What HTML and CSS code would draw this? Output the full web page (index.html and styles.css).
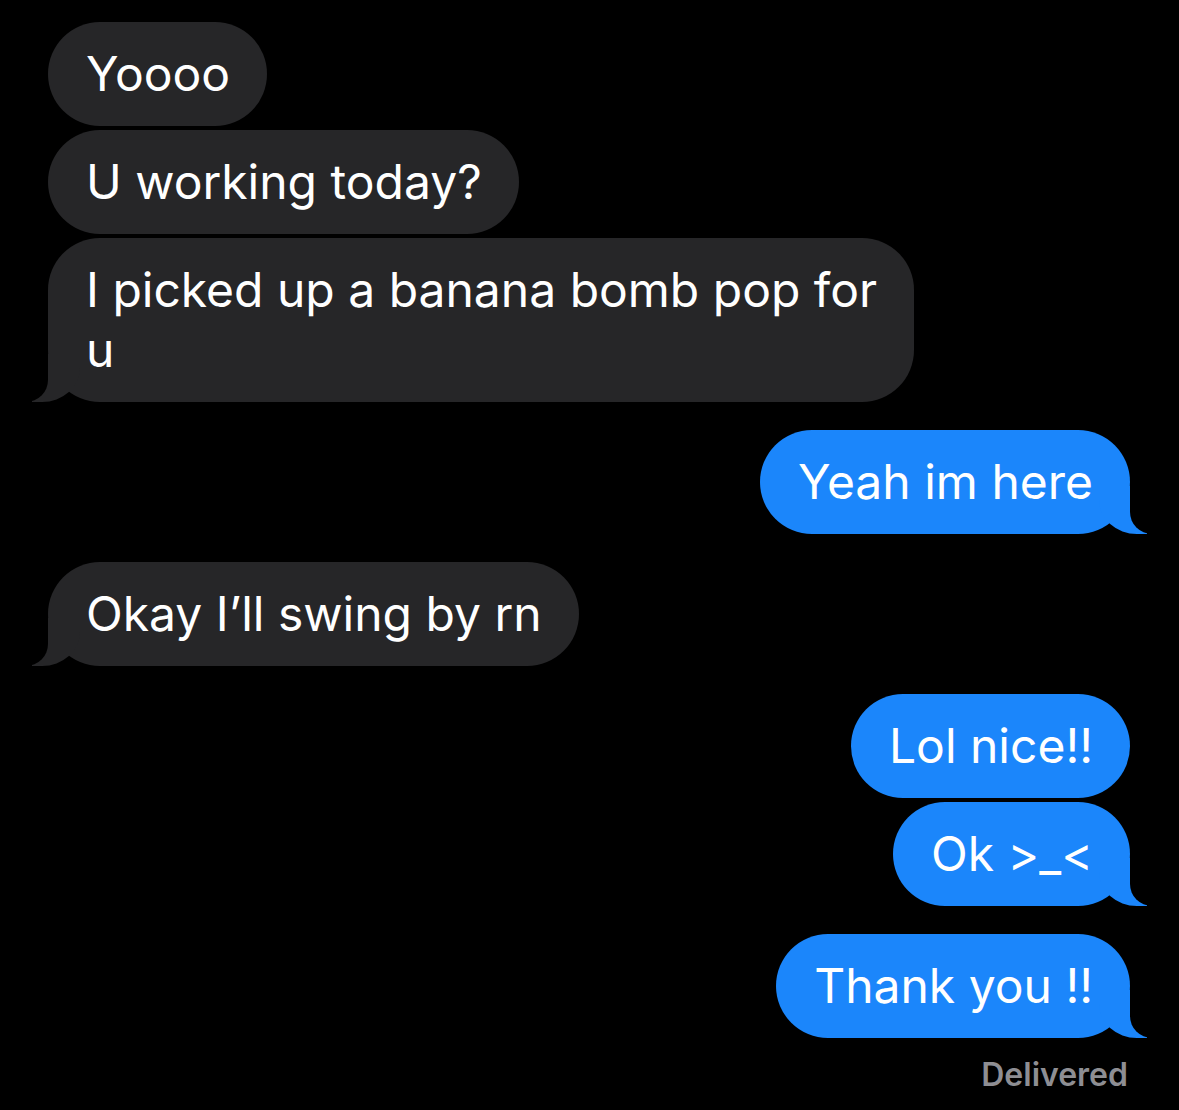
FILE: index.html
```html
<!DOCTYPE html>
<html lang="en">
<head>
  <meta charset="UTF-8" />
  <meta name="viewport" content="width=device-width, initial-scale=1.0"/>
  <title>Messages</title>
  <link rel="stylesheet" href="styles.css">
</head>
<body>
  <div class="thread">
    <!-- them -->
    <div class="group">
      <div class="bubble them">Yoooo</div>
      <div class="bubble them">U working today?</div>
      <div class="bubble them tail">I picked up a banana bomb pop for<br/>u</div>
    </div>

    <!-- me -->
    <div class="group">
      <div class="bubble me tail">Yeah im here</div>
    </div>

    <div class="group">
      <div class="bubble them tail">Okay I’ll swing by rn</div>
    </div>

    <div class="group">
      <div class="bubble me">Lol nice!!</div>
      <div class="bubble me tail">Ok &gt;_&lt;</div>
    </div>

    <div class="group">
      <div class="bubble me tail">Thank you !!</div>
      <div class="status">Delivered</div>
    </div>
  </div>
</body>
</html>
```

FILE: styles.css
```css
body {
  margin: 0;
  background: #000;
  font-family: Inter, "Liberation Sans", sans-serif;
  color: #fff;
  overflow: hidden;
}

/* 대화 영역 */
.thread {
  display: flex;
  flex-direction: column;
  gap: 28px;
  padding: 22px 49px 0 48px;
}
.group {
  display: flex;
  flex-direction: column;
  gap: 4px;
}

/* 말풍선 */
.bubble {
  position: relative;
  font-size: 48px;
  line-height: 60px;
  padding: 22px 37px 22px 38px;
  border-radius: 52px;
  max-width: 820px;
}
.them {
  align-self: flex-start;
  background: #262628;
}
.me {
  align-self: flex-end;
  background: #1b86fb;
}

/* 꼬리 */
.tail::before,
.tail::after {
  content: '';
  position: absolute;
  bottom: 0;
  height: 48px;
}
.them.tail::before {
  left: -16px;
  width: 48px;
  background: #262628;
  border-bottom-right-radius: 38px 34px;
}
.them.tail::after {
  left: -60px;
  width: 60px;
  background: #000;
  border-bottom-right-radius: 22px;
}
.me.tail::before {
  right: -17px;
  width: 48px;
  background: #1b86fb;
  border-bottom-left-radius: 38px 34px;
}
.me.tail::after {
  right: -60px;
  width: 60px;
  background: #000;
  border-bottom-left-radius: 22px;
}

/* 전송 상태 */
.status {
  align-self: flex-end;
  margin: 13px 2px 0 0;
  font-size: 32px;
  font-weight: 600;
  color: #8e8e93;
}
```
